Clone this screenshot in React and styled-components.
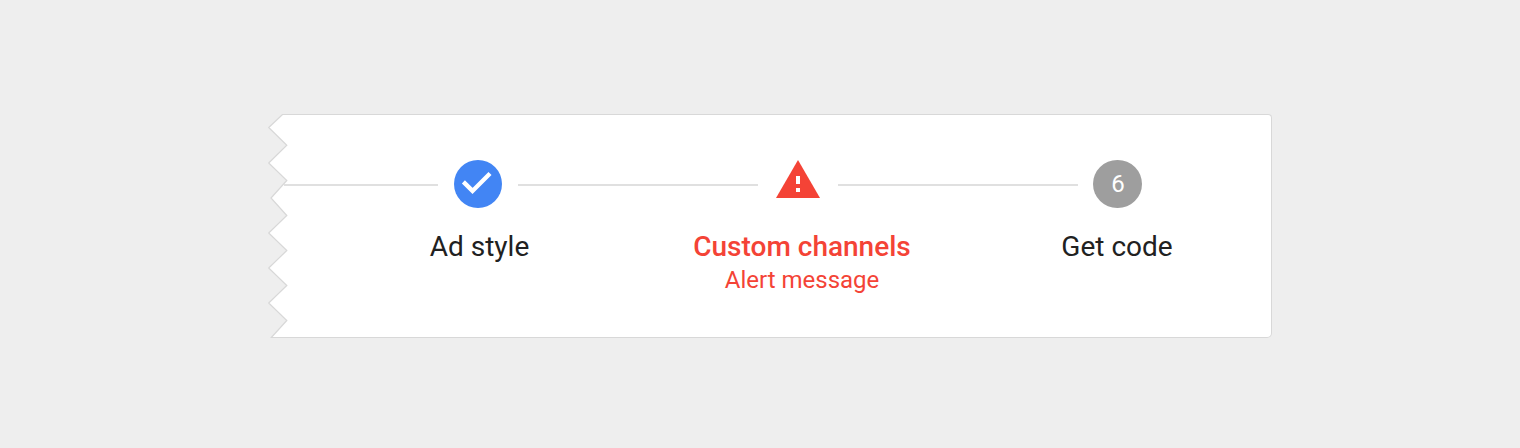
import React from "react";
import styled, { createGlobalStyle } from "styled-components";

const GlobalStyle = createGlobalStyle`
  *, *::before, *::after { box-sizing: border-box; }
  body { margin: 0; background: #eeeeee; }
`;

const Page = styled.main`
  height: 448px;
  padding: 114px 248px 110px 267px;
  background: #eeeeee;
  font-family: Roboto, sans-serif;
`;

const Panel = styled.section`
  display: flex;
  height: 224px;
`;

const Edge = styled.svg`
  flex: none;
  width: 21px;
  height: 224px;
`;

const Stepper = styled.ol`
  flex: 1;
  display: flex;
  align-items: flex-start;
  margin: 0;
  padding: 45px 0 0;
  list-style: none;
  background: #ffffff;
  border: 1px solid #d8d8d8;
  border-left: none;
  border-radius: 0 4px 5px 0;
`;

const Connector = styled.li`
  flex: none;
  width: ${(p) => p.$width}px;
  height: 2px;
  margin-top: 24px;
  background: #e0e0e0;
`;

const Step = styled.li`
  flex: none;
  display: flex;
  flex-direction: column;
  align-items: center;
  width: 80px;
  white-space: nowrap;
`;

const Marker = styled.span`
  display: flex;
  align-items: center;
  justify-content: center;
  width: ${(p) => p.$width || 48}px;
  height: 48px;
  margin-left: ${(p) => p.$shift || 0}px;
  border-radius: 50%;
  background: ${(p) => p.$color || "transparent"};
  color: #ffffff;
  font-size: 24px;
  line-height: 48px;

  svg { display: block; flex: none; }
`;

const StepNumber = styled.span`
  padding-left: 1px;
`;

const Title = styled.span`
  margin-top: 23px;
  margin-left: ${(p) => p.$shift || 0}px;
  font-size: 28px;
  line-height: 32px;
  font-weight: ${(p) => (p.$alert ? 500 : 400)};
  color: ${(p) => (p.$alert ? "#f44336" : "#212121")};
`;

const Message = styled.span`
  margin-top: 3px;
  margin-left: 8px;
  font-size: 24px;
  line-height: 28px;
  color: #f44336;
`;

const TORN =
  "M21 .5H15.5L1.7 13.5L19.8 31.3L1.7 49L19.8 66.5L4 84L19.8 101.5L1.7 119L19.8 136.5L1.7 154L19.8 171.5L1.7 189L19.8 206.5L4.3 223.5H21";

function TornEdge() {
  return (
    <Edge viewBox="0 0 21 224" aria-hidden="true">
      <path d={TORN} fill="#fff" stroke="#d8d8d8" strokeWidth="1.2" />
      <path d="M17 71H21" stroke="#e0e0e0" strokeWidth="2" />
    </Edge>
  );
}

function Check() {
  return (
    <svg width="48" height="48" viewBox="0 0 48 48" fill="none">
      <path d="M9.4 21.9L18.5 30.9L36 13.5" stroke="#fff" strokeWidth="4.3" />
    </svg>
  );
}

function Warning() {
  return (
    <svg width="48" height="48" viewBox="0 0 48 48">
      <path d="M24 0L46 38H2Z" fill="#f44336" />
      <path d="M22 16h4v8h-4zM22 28h4v4h-4z" fill="#fff" />
    </svg>
  );
}

export default function App() {
  return (
    <>
      <GlobalStyle />
      <Page>
        <Panel>
          <TornEdge />
          <Stepper>
            <Connector $width={150} />
            <Step>
              <Marker $color="#4285f4"><Check /></Marker>
              <Title $shift={3}>Ad style</Title>
            </Step>
            <Connector $width={240} />
            <Step>
              <Marker><Warning /></Marker>
              <Title $alert $shift={8}>Custom channels</Title>
              <Message>Alert message</Message>
            </Step>
            <Connector $width={240} />
            <Step>
              <Marker $color="#9e9e9e" $width={48.5} $shift={-1}>
                <StepNumber>6</StepNumber>
              </Marker>
              <Title $shift={-2}>Get code</Title>
            </Step>
          </Stepper>
        </Panel>
      </Page>
    </>
  );
}
